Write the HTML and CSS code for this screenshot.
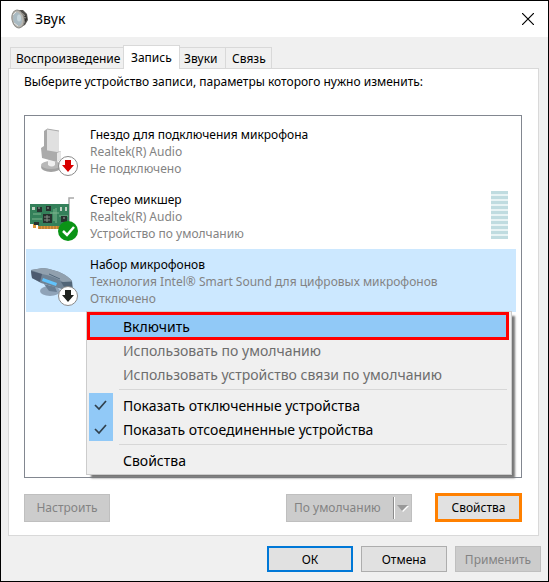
FILE: index.html
```html
<!DOCTYPE html>
<html lang="ru">
<head>
<meta charset="utf-8">
<meta name="viewport" content="width=device-width, initial-scale=1">
<title>Звук</title>
<link rel="stylesheet" href="styles.css">
</head>
<body>
<main class="window">
  <header class="titlebar">
    <svg class="app-icon" viewBox="0 0 18 20" aria-hidden="true">
      <path d="M6 1 12 1 16 5 17 11 14 16 8 19Z" fill="#55534f"/>
      <path d="M10 2 15 6 16 10 13 15 11 17Z" fill="#302f2d"/>
      <path d="M11 4 14 7M12 8 15 9M11 13 14 13" stroke="#918e88" stroke-width="1.3"/>
      <ellipse cx="7" cy="10" rx="6" ry="9" transform="rotate(-12 7 10)" fill="#b8b6b0" stroke="#8d8c88"/>
      <ellipse cx="6.500" cy="10" rx="4.300" ry="7" transform="rotate(-12 7 10)" fill="#a9bac2"/>
      <ellipse cx="8" cy="9" rx="2" ry="3.500" fill="#c5d4da"/>
      <path d="M2 6 5 3M3 14 7 17" stroke="#e2e1de"/>
    </svg>
    <h1 class="title">Звук</h1>
    <button class="close" type="button" aria-label="Закрыть">
      <svg viewBox="0 0 12 12" width="12" height="12" aria-hidden="true"><path d="M0 0 12 12M12 0 0 12" stroke="#000" stroke-width="1.200"/></svg>
    </button>
  </header>

  <div class="content">
    <div class="tabs" role="tablist">
      <button class="tab tab-wide" type="button" role="tab" aria-selected="false">Воспроизведение</button>
      <button class="tab tab-active" type="button" role="tab" aria-selected="true">Запись</button>
      <button class="tab" type="button" role="tab" aria-selected="false">Звуки</button>
      <button class="tab tab-last" type="button" role="tab" aria-selected="false">Связь</button>
    </div>

    <section class="panel" role="tabpanel">
      <p class="hint">Выберите устройство записи, параметры которого нужно изменить:</p>
      <div class="device-list">
        <article class="device">
          <svg class="device-icon" viewBox="0 0 50 52" aria-hidden="true">
            <ellipse cx="21" cy="41" rx="10" ry="5" fill="#a2a2a2"/>
            <ellipse cx="21" cy="39" rx="10" ry="4" fill="#b8b8b8"/>
            <path d="M18 30h7v9q-3 3-7 0Z" fill="#f0f0f0"/>
            <path d="M15 4 17 3 29 5 29 29 15 27Z" fill="#e0e0e0"/>
            <path d="M14 5 17 3 17 27 14 26Z" fill="#a8a8a8"/>
            <path d="M17 3 29 5" stroke="#aaa"/>
            <path d="M11 22 14 20 15 24 27 26 31 25 31 33 27 36 12 32Z" fill="#ababab"/>
            <path d="M27 27 31 25 31 33 27 36Z" fill="#e6e6e6"/>
            <circle cx="38" cy="40" r="9.500" fill="#fff" stroke="#8a8a8a"/>
            <path d="M35 34h6v5h3l-6 7-6-7h3Z" fill="#d80000"/>
          </svg>
          <div class="device-text">
            <h2>Гнездо для подключения микрофона</h2>
            <p>Realtek(R) Audio</p>
            <p>Не подключено</p>
          </div>
        </article>
        <article class="device">
          <svg class="device-icon" viewBox="0 0 50 52" aria-hidden="true">
            <path d="M44 7H39V36" fill="none" stroke="#a9a9a9" stroke-width="1.500"/>
            <path d="M3 33h3v4H3zM8 35h23v3H8z" fill="#dc9638"/>
            <path d="M10 35v3M13 35v3M16 35v3M19 35v3M22 35v3M25 35v3M28 35v3" stroke="#9a6b32"/>
            <path d="M0 13H39V35H8V33H0Z" fill="#34805a"/>
            <path d="M3 23h8M2 28h10M20 22h9M24 18v12M26 17v15M29 25h9" stroke="#7db68e"/>
            <path d="M7 16h5v5H7zM16 15h5v5h-5zM13 23h9v9h-9zM31 25h6v6h-6zM4 31h5v3H4z" fill="#26302d"/>
            <path d="M2 16h3v3H2zM30 16h2v4h-2zM35 16h2v4h-2z" fill="#c0d1c3"/>
            <path d="M14 26h6M14 29h6M17 24v7" stroke="#829087"/>
            <path d="M8 17h2M17 17h2M33 27h2" stroke="#9ba89f"/>
            <circle cx="38" cy="40" r="10" fill="#0a9416"/>
            <path d="M33 40 37 44 44 36" fill="none" stroke="#fff" stroke-width="2.500"/>
          </svg>
          <div class="device-text">
            <h2>Стерео микшер</h2>
            <p>Realtek(R) Audio</p>
            <p>Устройство по умолчанию</p>
          </div>
          <div class="meter" aria-hidden="true"></div>
        </article>
        <article class="device device-selected">
          <svg class="device-icon" viewBox="0 0 50 52" aria-hidden="true">
            <ellipse cx="20" cy="35" rx="10" ry="5" fill="#8fa3b8"/>
            <path d="M14 28 25 31 27 36 19 35Z" fill="#687d92"/>
            <path d="M1 14 13 12Q34 15 42 25L43 32 39 35Q24 31 11 27L2 22Z" fill="#708395"/>
            <path d="M1 14 13 12Q34 15 42 25L33 26Q24 20 12 18Z" fill="#91a0ae"/>
            <path d="M1 15 12 18 10 26 2 22Z" fill="#4d5b70"/>
            <path d="M31 26 42 26 42 32 36 34Z" fill="#526577"/>
            <path d="M13 22 27 27 26 30 12 25Z" fill="#61c3fc"/>
            <path d="M19 18 30 23" stroke="#52687c"/>
            <circle cx="38" cy="40" r="9.500" fill="#fff" stroke="#8a8a8a"/>
            <path d="M35 34h6v5h3l-6 7-6-7h3Z" fill="#20231f"/>
          </svg>
          <div class="device-text">
            <h2>Набор микрофонов</h2>
            <p>Технология Intel® Smart Sound для цифровых микрофонов</p>
            <p>Отключено</p>
          </div>
        </article>

        <div class="menu" role="menu">
          <button class="menu-item menu-highlight" type="button" role="menuitem">Включить</button>
          <button class="menu-item" type="button" role="menuitem" disabled>Использовать по умолчанию</button>
          <button class="menu-item" type="button" role="menuitem" disabled>Использовать устройство связи по умолчанию</button>
          <hr class="separator">
          <button class="menu-item" type="button" role="menuitemcheckbox" aria-checked="true"><span class="check"><svg viewBox="0 0 24 24" aria-hidden="true"><path d="M6 12 10 16 17 8" fill="none" stroke="#30404d" stroke-width="1.700"/></svg></span>Показать отключенные устройства</button>
          <button class="menu-item" type="button" role="menuitemcheckbox" aria-checked="true"><span class="check"><svg viewBox="0 0 24 24" aria-hidden="true"><path d="M6 12 10 16 17 8" fill="none" stroke="#30404d" stroke-width="1.700"/></svg></span>Показать отсоединенные устройства</button>
          <hr class="separator">
          <button class="menu-item" type="button" role="menuitem">Свойства</button>
        </div>
      </div>

      <div class="device-actions">
        <button class="button" type="button" disabled>Настроить</button>
        <button class="button split" type="button" disabled>
          <span>По умолчанию</span>
          <svg class="split-arrow" viewBox="0 0 18 22" aria-hidden="true"><path d="M.5 0V22" stroke="#8c8c8c"/><path d="M1.500 0V22" stroke="#fff"/><path d="M5 9H16L10 15Z" fill="#fff"/><path d="M4 8H15L9 14Z" fill="#999"/></svg>
        </button>
        <button class="button properties" type="button">Свойства</button>
      </div>
    </section>
  </div>

  <footer class="footer">
    <button class="button ok" type="button">ОК</button>
    <button class="button" type="button">Отмена</button>
    <button class="button" type="button" disabled>Применить</button>
  </footer>
</main>
</body>
</html>
```
FILE: styles.css
```css
* { box-sizing: border-box; }

body {
  margin: 0;
  font: 12px/17px "Noto Sans", "Open Sans", sans-serif;
  color: #000;
}

h1, h2, p { margin: 0; font: inherit; }

button {
  margin: 0;
  padding: 0;
  border: 0;
  background: none;
  font: inherit;
  color: inherit;
}

.window {
  display: flex;
  flex-direction: column;
  min-height: 100vh;
  border: 1px solid #000;
  background: #f0f0f0;
}

.titlebar {
  display: flex;
  align-items: center;
  height: 36px;
  padding: 0 14px 0 10px;
  background: #fff;
}

.app-icon { width: 18px; height: 20px; }

.title {
  flex: 1;
  margin-left: 6px;
  font-size: 14px;
  line-height: 20px;
}

.close { display: flex; }

.content {
  flex: 1;
  display: flex;
  flex-direction: column;
  padding: 8px 9px 0 7px;
}

.tabs {
  display: flex;
  align-items: flex-end;
  padding-left: 2px;
}

.tab {
  min-width: 46px;
  height: 21px;
  padding: 0 4px;
  border: 1px solid #d9d9d9;
  border-width: 1px 1px 0 0;
  text-align: left;
}

.tab-wide {
  min-width: 113px;
  padding: 0 0 0 5px;
  border-left-width: 1px;
  border-right-width: 0;
}

.tab-last { padding: 0 0 0 6px; }

.tab-active {
  min-width: 57px;
  height: 24px;
  margin-bottom: -1px;
  padding: 0 7px 1px;
  border-left-width: 1px;
  background: #fff;
  z-index: 1;
}

.panel {
  flex: 1;
  display: flex;
  flex-direction: column;
  padding: 4px 16px 13px 15px;
  border: 1px solid #d9d9d9;
  background: #fff;
}

.hint { margin-bottom: 25px; }

.device-list {
  position: relative;
  flex: 1;
  display: flex;
  flex-direction: column;
  gap: 2px;
  min-height: 362px;
  padding: 3px 5px 3px 1px;
  border: 1px solid #828790;
}

.device {
  display: flex;
  align-items: flex-start;
  height: 63px;
  padding: 7px 8px 0 4px;
}

.device-selected { background: #cce8ff; }

.device-icon {
  flex: none;
  width: 50px;
  height: 52px;
}

.device-text {
  flex: 1;
  margin-left: 10px;
  color: #838383;
}

.device-text h2 { color: #000; }

.meter {
  width: 17px;
  height: 48px;
  background: repeating-linear-gradient(#c0dce0 0 3px, #e9f4f5 3px 5px);
}

.menu {
  position: absolute;
  top: 195px;
  left: 61px;
  right: 9px;
  padding: 2px 4px 2px 2px;
  border: 1px solid #ccc;
  background: #f0f0f0;
  box-shadow: 4px 4px 2px -1px #777;
  font-size: 14px;
}

.menu-item {
  position: relative;
  display: flex;
  align-items: center;
  width: 100%;
  height: 24px;
  padding-left: 34px;
  white-space: nowrap;
}

.menu-item:disabled { color: #6d6d6d; }

.menu-highlight {
  background: #91c9f7;
  outline: 3px solid #f00;
  outline-offset: -1px;
}

.check {
  width: 24px;
  height: 24px;
  margin: 0 10px 0 -34px;
  background: #91c9f7;
}

.check svg { display: block; }

.separator {
  height: 1px;
  margin: 3px 0 3px 30px;
  border: 0;
  background: #d7d7d7;
}

.device-actions {
  display: flex;
  align-items: center;
  margin-top: 15px;
}

.button {
  width: 86px;
  height: 28px;
  border: 1px solid #adadad;
  background: #e1e1e1;
}

.button:disabled {
  border-color: #bfbfbf;
  background: #ccc;
  color: #838383;
}

.split {
  display: flex;
  align-items: center;
  justify-content: space-between;
  width: 126px;
  margin-left: auto;
  padding-left: 7px;
}

.split-arrow { width: 18px; height: 22px; }

.properties {
  width: 87px;
  height: 29px;
  margin-left: 23px;
  border: 3px solid #ff8000;
}

.footer {
  display: flex;
  justify-content: flex-end;
  gap: 8px;
  padding: 10px 7px 9px;
}

.footer .button { height: 26px; }
.footer .ok { border: 2px solid #0078d7; }
```
